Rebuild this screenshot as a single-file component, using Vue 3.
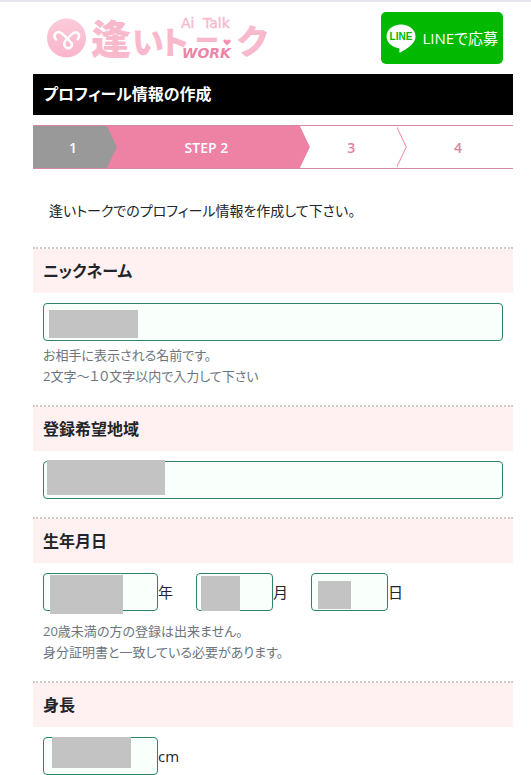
<template>
  <div class="page">
    <header class="header">
      <a href="#" class="logo" aria-label="逢いトーク WORK">
        <svg viewBox="0 0 224 44" class="logo-svg">
          <defs>
            <linearGradient id="logoPink" x1="0" y1="0" x2="0" y2="1">
              <stop offset="0" stop-color="#fbcbd9" />
              <stop offset="1" stop-color="#f9b4cb" />
            </linearGradient>
          </defs>
          <circle cx="20.500" cy="22" r="19.500" fill="url(#logoPink)" />
          <path
            d="M10 23.500 C6 19 11 13.500 16 17.500 C20 21 23 24 25.500 27 C27.500 31 22 34 19.500 31 C17 28 18 26 20 24 L25.500 18.500 C30.500 13.500 36 19 31.500 23.500"
            fill="none" stroke="#fff" stroke-width="2.400" stroke-linecap="round" stroke-linejoin="round" />
          <g class="logo-name">
            <text x="45" y="38" font-size="40">逢</text>
            <text x="86" y="38" font-size="32">い</text>
            <text x="112" y="38" font-size="32">ト</text>
            <text x="149" y="33" font-size="24">ー</text>
            <text x="190" y="38" font-size="34">ク</text>
          </g>
          <path d="M181 29.500 L177.500 26 C176.500 23.500 180 22.500 181 25 C182 22.500 185.500 23.500 184.500 26 Z" fill="#f58fb0" />
          <g class="logo-sub">
            <text x="135" y="12">Ai</text>
            <text x="157" y="12">Talk</text>
          </g>
          <text x="136" y="42" class="logo-work">WORK</text>
        </svg>
      </a>
      <a href="#" class="line-btn">
        <svg viewBox="0 0 30 29" class="line-icon" aria-hidden="true">
          <path d="M15 0.500 C7 0.500 0.500 5.700 0.500 12.500 C0.500 18.300 5.500 22.800 12 24 C14 24.400 13.500 25.500 13.300 28 C13.300 28.800 14 28.700 15 28 C21 24.500 29.500 20 29.500 12.500 C29.500 5.700 23 0.500 15 0.500 Z" fill="#fff" />
          <text x="15" y="16" text-anchor="middle" class="line-word">LINE</text>
        </svg>
        <span>LINEで応募</span>
      </a>
    </header>

    <h1 class="page-title">プロフィール情報の作成</h1>

    <ol class="steps">
      <li v-for="step in steps" :key="step.label" class="step" :class="step.state">
        {{ step.label }}
      </li>
    </ol>

    <p class="intro">逢いトークでのプロフィール情報を作成して下さい。</p>

    <form @submit.prevent>
      <section v-for="item in items" :key="item.title" class="item">
        <h2 class="item-title">
          <label :for="item.fields[0].id">{{ item.title }}</label>
        </h2>
        <div class="item-body">
          <div class="fields">
            <template v-for="field in item.fields" :key="field.id">
              <div class="field" :class="field.size">
                <input :id="field.id" v-model="form[field.id]" type="text" class="input"
                  :aria-label="item.title + (field.unit || '')">
                <span class="mask" :class="'mask-' + field.id"></span>
              </div>
              <label v-if="field.unit" :for="field.id" class="unit">{{ field.unit }}</label>
            </template>
          </div>
          <p v-if="item.help" class="help" :class="{ spaced: item.fields.length > 1 }">
            <span v-for="line in item.help" :key="line">{{ line }}</span>
          </p>
        </div>
      </section>
    </form>
  </div>
</template>

<script setup>
import { reactive } from 'vue';

const steps = [
  { label: '1', state: 'done' },
  { label: 'STEP 2', state: 'current' },
  { label: '3', state: 'next' },
  { label: '4', state: 'last' },
];

// 入力値
const form = reactive({
  nickname: '',
  area: '',
  year: '',
  month: '',
  day: '',
  height: '',
});

// 入力項目
const items = [
  {
    title: 'ニックネーム',
    fields: [{ id: 'nickname', size: 'full' }],
    help: ['お相手に表示される名前です。', '2文字～１０文字以内で入力して下さい'],
  },
  {
    title: '登録希望地域',
    fields: [{ id: 'area', size: 'full' }],
  },
  {
    title: '生年月日',
    fields: [
      { id: 'year', size: 'quarter', unit: '年' },
      { id: 'month', size: 'sixth', unit: '月' },
      { id: 'day', size: 'sixth', unit: '日' },
    ],
    help: ['20歳未満の方の登録は出来ません。', '身分証明書と一致している必要があります。'],
  },
  {
    title: '身長',
    fields: [{ id: 'height', size: 'quarter', unit: 'cm' }],
  },
];
</script>

<style>
body {
  margin: 0;
  background: #fff;
}
</style>

<style scoped>
* {
  box-sizing: border-box;
}

.page {
  padding: 0 18px 0 33px;
  border-top: 2px solid #e3e5eb;
  color: #212529;
  font-family: "Open Sans", "Noto Sans CJK JP", sans-serif;
  font-size: 16px;
  line-height: 24px;
  font-feature-settings: "palt";
}

.header {
  display: flex;
  justify-content: space-between;
  align-items: center;
  padding: 10px 10px 10px 13px;
}

.logo-svg {
  display: block;
  width: 224px;
  height: 44px;
  overflow: visible;
}

.logo-name {
  fill: #f9b9cd;
  font-family: "Noto Sans CJK JP", sans-serif;
  font-weight: 900;
  font-feature-settings: normal;
}

.logo-sub {
  fill: #f9b9cd;
  stroke: #f9b9cd;
  stroke-width: 0.4px;
  font-family: "DejaVu Sans", sans-serif;
  font-size: 14px;
}

.logo-work {
  fill: #ec86a8;
  font-family: "DejaVu Sans", sans-serif;
  font-size: 14px;
  font-weight: 700;
  font-style: italic;
}

.line-btn {
  display: flex;
  align-items: center;
  gap: 6px;
  height: 52px;
  padding: 0 5px;
  border-radius: 5px;
  background: #00b900;
  color: #fff;
  font-size: 15px;
  text-decoration: none;
  white-space: nowrap;
}

.line-icon {
  width: 30px;
  height: 29px;
}

.line-word {
  fill: #00b900;
  font-family: "Liberation Sans", sans-serif;
  font-size: 10px;
  font-weight: 700;
}

.page-title {
  margin: 0;
  padding: 8px 10px 9px;
  background: #000;
  color: #fff;
  font-size: 16px;
  font-weight: 600;
  line-height: 24px;
}

.steps {
  display: flex;
  height: 44px;
  margin: 10px 0 0;
  padding: 0;
  border-top: 1px solid #d88aa5;
  border-bottom: 1px solid #d88aa5;
  list-style: none;
  color: #de84a0;
  font-size: 14px;
  font-weight: 600;
}

.step {
  position: relative;
  display: flex;
  align-items: center;
  justify-content: center;
  padding: 2px 0 0 6px;
}

.step.done {
  width: 15.4%;
  background: #999;
  color: #fff;
}

.step.current {
  width: 40.2%;
  background: #ed82a4;
  color: #fff;
}

.step.next {
  width: 20.2%;
}

.step.last {
  width: 24.2%;
}

/* 右向きの矢印 */
.step.done::after,
.step.current::after,
.step.next::before,
.step.next::after {
  content: "";
  position: absolute;
  z-index: 1;
  top: 0;
  left: 100%;
  width: 10px;
  height: 100%;
  background: #999;
  clip-path: polygon(0 0, 100% 50%, 0 100%);
}

.step.current::after,
.step.next::before {
  background: #ed82a4;
}

.step.next::after {
  left: calc(100% - 1px);
  background: #fff;
}

.intro {
  margin: 0;
  padding: 30px 16px 24px;
  font-size: 14px;
}

.item-title {
  margin: 0;
  padding: 10px;
  border-top: 2px dotted #d3c8c8;
  background: #fff1f1;
  background-clip: padding-box;
  font-size: 16px;
  font-weight: 600;
  line-height: 24px;
}

.item-body {
  padding: 10px 10px 18px;
}

.item:last-child .item-body {
  padding-bottom: 0;
}

.fields {
  display: flex;
  align-items: center;
}

.field {
  position: relative;
}

.full {
  width: 100%;
}

.quarter {
  width: 25%;
}

.sixth {
  width: calc(100% / 6);
}

.input {
  display: block;
  width: 100%;
  height: 38px;
  padding: 6px 12px;
  border: 1px solid #2b8566;
  border-radius: 4px;
  background: #f9fffb;
  color: inherit;
  font: inherit;
}

.unit {
  width: calc(100% / 12);
  font-size: 15px;
}

.help {
  margin: 4px 0 0;
  color: #6c757d;
  font-size: 13px;
  line-height: 21px;
}

.help.spaced {
  margin-top: 10px;
}

.help span {
  display: block;
}

/* 入力内容を隠すグレーの目隠し */
.mask {
  position: absolute;
  background: #c3c3c3;
}

.mask-nickname {
  top: 7px;
  left: 6px;
  width: 89px;
  height: 28px;
}

.mask-area {
  top: -1px;
  left: 4px;
  width: 118px;
  height: 35px;
}

.mask-year {
  top: 2px;
  left: 7px;
  width: 73px;
  height: 39px;
}

.mask-month {
  top: 3px;
  left: 5px;
  width: 39px;
  height: 35px;
}

.mask-day {
  top: 8px;
  left: 7px;
  width: 33px;
  height: 28px;
}

.mask-height {
  top: 0;
  left: 9px;
  width: 79px;
  height: 31px;
}
</style>
